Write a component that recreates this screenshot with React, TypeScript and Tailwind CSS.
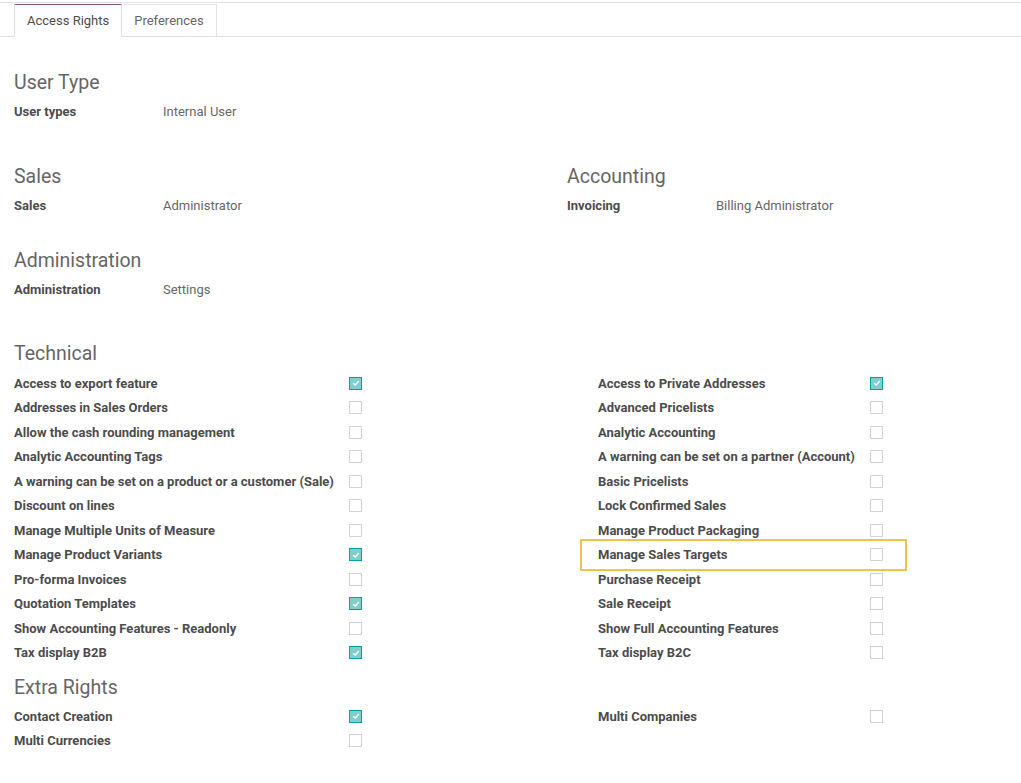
import { ReactNode } from 'react'

const font = { fontFamily: 'Roboto, "Noto Sans", sans-serif' }

function Check({ on }: { on?: boolean }) {
  if (on) {
    return (
      <span className="flex h-[13px] w-[13px] items-center justify-center border border-[#00a09d] bg-[#7fcfcd]">
        <svg viewBox="0 0 10 10" className="h-[8px] w-[8px]">
          <path d="M1.5 5.2 L4 7.5 L8.5 2.5" fill="none" stroke="#fff" strokeWidth="1.6" />
        </svg>
      </span>
    )
  }
  return <span className="block h-[13px] w-[13px] border border-[#d2d2d2] bg-white" />
}

function Heading({ children, className = '' }: { children: ReactNode; className?: string }) {
  return <div className={`text-[19.5px] leading-[24px] text-[#666] ${className}`}>{children}</div>
}

function Field({ label, value }: { label: string; value: string }) {
  return (
    <div className="flex h-[20px] items-center text-[13px]">
      <span className="w-[149px] font-bold text-[#4c4c4c]">{label}</span>
      <span className="text-[#666]">{value}</span>
    </div>
  )
}

type Row = [string, boolean]

function CheckRow({ label, on, highlight }: { label: string; on: boolean; highlight?: boolean }) {
  return (
    <div className="relative flex h-[24.5px] items-center justify-between text-[13px]">
      <span className="font-bold text-[#4c4c4c]">{label}</span>
      <Check on={on} />
      {highlight && (
        <div className="pointer-events-none absolute -top-[4px] -bottom-[4px] -left-[18px] -right-[24px] border-2 border-[#f4c24a]" />
      )}
    </div>
  )
}

const techLeft: Row[] = [
  ['Access to export feature', true],
  ['Addresses in Sales Orders', false],
  ['Allow the cash rounding management', false],
  ['Analytic Accounting Tags', false],
  ['A warning can be set on a product or a customer (Sale)', false],
  ['Discount on lines', false],
  ['Manage Multiple Units of Measure', false],
  ['Manage Product Variants', true],
  ['Pro-forma Invoices', false],
  ['Quotation Templates', true],
  ['Show Accounting Features - Readonly', false],
  ['Tax display B2B', true],
]

const techRight: Row[] = [
  ['Access to Private Addresses', true],
  ['Advanced Pricelists', false],
  ['Analytic Accounting', false],
  ['A warning can be set on a partner (Account)', false],
  ['Basic Pricelists', false],
  ['Lock Confirmed Sales', false],
  ['Manage Product Packaging', false],
  ['Manage Sales Targets', false],
  ['Purchase Receipt', false],
  ['Sale Receipt', false],
  ['Show Full Accounting Features', false],
  ['Tax display B2C', false],
]

function CheckGrid({ left, right }: { left: Row[]; right: Row[] }) {
  return (
    <div className="flex">
      <div className="w-[348px]">
        {left.map(([l, on]) => (
          <CheckRow key={l} label={l} on={on} />
        ))}
      </div>
      <div className="ml-[236px] w-[285px]">
        {right.map(([l, on]) => (
          <CheckRow key={l} label={l} on={on} highlight={l === 'Manage Sales Targets'} />
        ))}
      </div>
    </div>
  )
}

export default function App() {
  return (
    <div style={font} className="h-[783px] w-[1021px] overflow-hidden bg-white pt-[2px]">
      <div className="border-t border-[#dee2e6]">
        <div className="flex border-b border-[#dee2e6] pl-[14px] pt-[1px] text-[13px]">
          <div className="-mb-px flex h-[33px] items-center border-x border-t border-x-[#dee2e6] border-t-[#875a7b] bg-white px-[12px] text-[#4c4c4c]">
            Access Rights
          </div>
          <div className="flex h-[32px] items-center border-r border-t border-[#dee2e6] px-[12px] text-[#666]">
            Preferences
          </div>
        </div>
      </div>

      <div className="px-[14px]">
        <Heading className="mt-[34px]">User Type</Heading>
        <div className="mt-[7px]">
          <Field label="User types" value="Internal User" />
        </div>

        <div className="mt-[43px] flex">
          <div className="w-[553px]">
            <Heading>Sales</Heading>
            <div className="mt-[7px]">
              <Field label="Sales" value="Administrator" />
            </div>
          </div>
          <div>
            <Heading>Accounting</Heading>
            <div className="mt-[7px]">
              <Field label="Invoicing" value="Billing Administrator" />
            </div>
          </div>
        </div>

        <Heading className="mt-[33px]">Administration</Heading>
        <div className="mt-[7px]">
          <Field label="Administration" value="Settings" />
        </div>

        <Heading className="mt-[42px]">Technical</Heading>
        <div className="mt-[5px]">
          <CheckGrid left={techLeft} right={techRight} />
        </div>

        <Heading className="mt-[11px]">Extra Rights</Heading>
        <div className="mt-[4px]">
          <CheckGrid
            left={[
              ['Contact Creation', true],
              ['Multi Currencies', false],
            ]}
            right={[['Multi Companies', false]]}
          />
        </div>
      </div>
    </div>
  )
}
